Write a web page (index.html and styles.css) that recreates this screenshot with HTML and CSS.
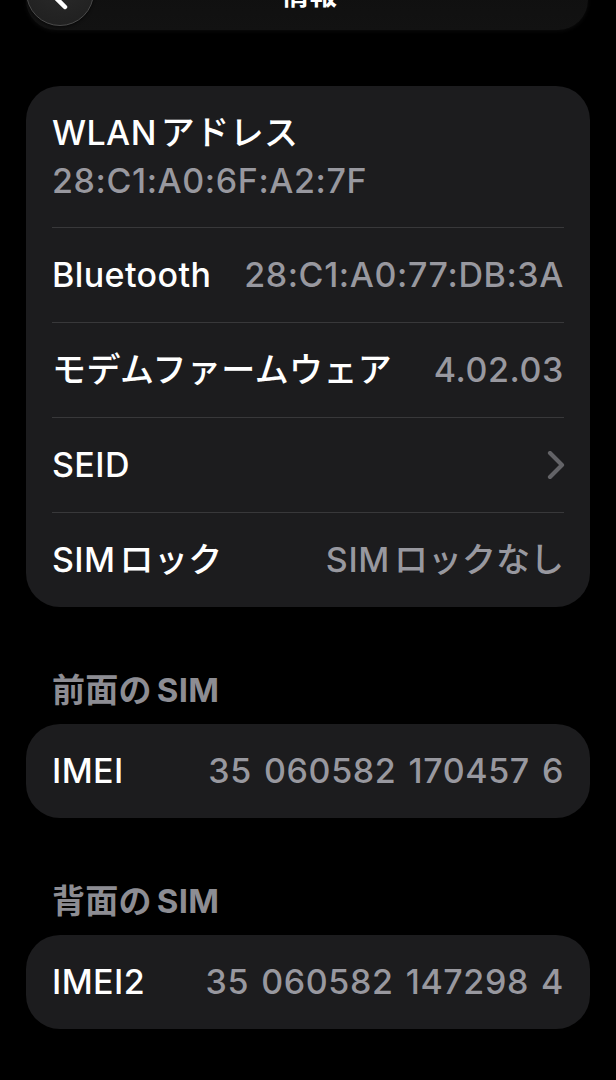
FILE: index.html
```html
<!DOCTYPE html>
<html lang="ja">
<head>
<meta charset="utf-8">
<title>情報</title>
<link rel="stylesheet" href="styles.css">
</head>
<body>
<header class="nav">
  <div class="nav-bar">
    <div class="nav-title">情報</div>
  </div>
  <button class="back" aria-label="戻る">
    <svg class="back-icon" width="68" height="68" viewBox="0 0 68 68"><path d="M39 19 L24 34 L39 49" fill="none" stroke="#fff" stroke-width="4.5" stroke-linecap="round" stroke-linejoin="round"/></svg>
  </button>
</header>
<main class="content">
  <section class="card">
    <div class="row row-stack">
      <div class="label"><span class="en">WLAN</span>アドレス</div>
      <div class="value">28:C1:A0:6F:A2:7F</div>
    </div>
    <div class="row">
      <div class="label">Bluetooth</div>
      <div class="value">28:C1:A0:77:DB:3A</div>
    </div>
    <div class="row">
      <div class="label">モデムファームウェア</div>
      <div class="value">4.02.03</div>
    </div>
    <div class="row">
      <div class="label">SEID</div>
      <svg class="chevron" width="18" height="28" viewBox="0 0 18 28"><path d="M3 2 L15 14 L3 26" fill="none" stroke="#636367" stroke-width="4.2" stroke-linecap="round" stroke-linejoin="round"/></svg>
    </div>
    <div class="row">
      <div class="label"><span class="en">SIM</span>ロック</div>
      <div class="value"><span class="en">SIM</span><span class="jp">ロックなし</span></div>
    </div>
  </section>

  <h2 class="section-title">前面の<span class="en-l">SIM</span></h2>
  <section class="card">
    <div class="row">
      <div class="label">IMEI</div>
      <div class="value">35 060582 170457 6</div>
    </div>
  </section>

  <h2 class="section-title">背面の<span class="en-l">SIM</span></h2>
  <section class="card">
    <div class="row">
      <div class="label">IMEI2</div>
      <div class="value">35 060582 147298 4</div>
    </div>
  </section>
</main>
</body>
</html>
```

FILE: styles.css
```css
* { box-sizing: border-box; }

html, body {
  margin: 0;
  padding: 0;
  background: #000;
}

body {
  width: 616px;
  height: 1080px;
  overflow: hidden;
  font-family: Inter, "Noto Sans CJK JP", sans-serif;
  color: #fff;
}

.nav {
  position: relative;
  display: flow-root;
  height: 30px;
  padding: 0 28px 0 26px;
}

.nav-bar {
  height: 70px;
  margin-top: -40px;
  border-radius: 0 0 30px 30px;
  background: linear-gradient(#0e0e0e, #121212);
  box-shadow: 0 1px 4px rgba(20, 20, 20, 0.6);
  display: flex;
  justify-content: center;
  padding-top: 19px;
}

.nav-title {
  font-family: "Noto Sans CJK JP", sans-serif;
  font-weight: 700;
  font-size: 28px;
  line-height: 28px;
  margin-left: 4px;
}

.back {
  position: absolute;
  left: 26px;
  top: -42px;
  width: 68px;
  height: 68px;
  padding: 0;
  border-radius: 50%;
  border: 1.5px solid #4a4a4a;
  background: radial-gradient(circle at 50% 30%, #2c2c2c, #1e1e1e);
  box-shadow: 0 1px 3px rgba(0,0,0,0.6);
}

.back-icon {
  display: block;
  margin: -1.5px;
}

.content {
  padding: 56px 26px 0;
}

.card {
  background: #1c1c1e;
  border-radius: 34px;
}

.row {
  margin: 0 26px;
  height: 95px;
  border-top: 1px solid #38383a;
  display: flex;
  align-items: center;
  justify-content: space-between;
  font-size: 34px;
  line-height: 48px;
  font-weight: 500;
}

.row:first-child {
  border-top: none;
  height: 94px;
}

.row-stack {
  display: block;
  height: auto;
  padding: 23px 0 22px;
}

.row-stack:first-child { height: 141px; }

.label {
  color: #fff;
  white-space: nowrap;
  letter-spacing: 0.4px;
}

.value {
  color: #98989f;
  white-space: nowrap;
  letter-spacing: 0.6px;
  word-spacing: 2.5px;
}

.jp { letter-spacing: 0; }

.en { margin-right: 0.12em; }
.en-l { margin-left: 0.15em; }

.chevron {
  display: block;
  margin-right: -1px;
}

.section-title {
  margin: 59px 0 10px 26px;
  font-size: 33px;
  line-height: 48px;
  font-weight: 700;
  color: #8d8d93;
  letter-spacing: 0.3px;
}
```
